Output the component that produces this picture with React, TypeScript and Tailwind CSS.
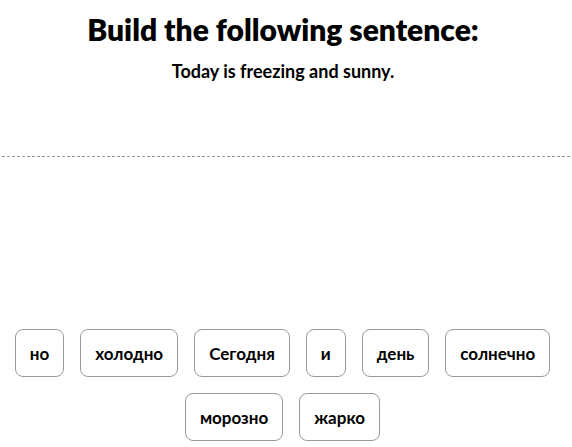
const WORDS_ROW1 = ['но', 'холодно', 'Сегодня', 'и', 'день', 'солнечно'];
const WORDS_ROW2 = ['морозно', 'жарко'];

function WordButton({ word }: { word: string }) {
    return (
        <button className="h-12 px-[14px] rounded-lg border border-[#9a9a9a] bg-white text-[17px] font-bold text-black leading-none">
            {word}
        </button>
    );
}

export default function App() {
    return (
        <div className="w-[572px] h-[447px] bg-white overflow-hidden" style={{ fontFamily: 'Lato, "Liberation Sans", sans-serif' }}>
            <div className="h-[156px] pr-[6px] pt-[9px] text-center">
                <h1 className="text-[30px] leading-[40px] font-extrabold text-black">Build the following sentence:</h1>
                <p className="mt-[10px] text-[18px] leading-[24px] font-bold text-black">Today is freezing and sunny.</p>
            </div>
            <div className="mx-[2px] border-t border-dashed border-[#999]" />
            <div className="mt-[172px] pr-[7px] flex flex-col items-center gap-4">
                <div className="flex gap-4">
                    {WORDS_ROW1.map((w) => (
                        <WordButton key={w} word={w} />
                    ))}
                </div>
                <div className="flex gap-4">
                    {WORDS_ROW2.map((w) => (
                        <WordButton key={w} word={w} />
                    ))}
                </div>
            </div>
        </div>
    );
}
